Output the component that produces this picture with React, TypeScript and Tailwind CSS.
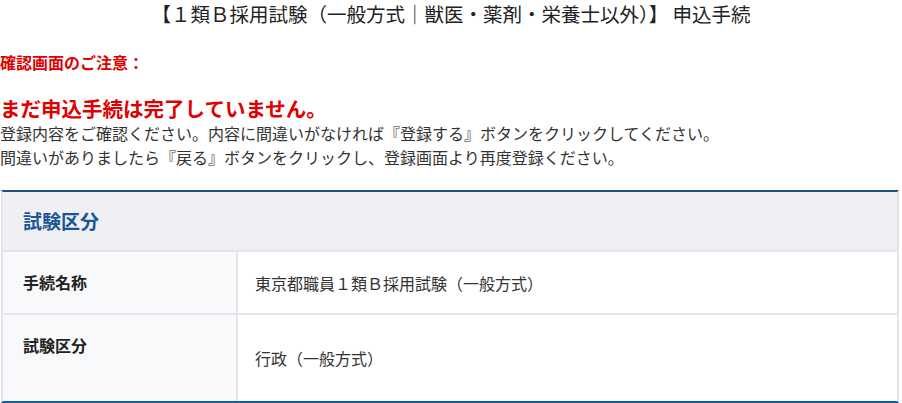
const font = { fontFamily: '"Noto Sans CJK JP", "Noto Sans", sans-serif' }

const rows = [
  { label: "手続名称", value: "東京都職員１類Ｂ採用試験（一般方式）", h: "h-[63px]" },
  { label: "試験区分", value: "行政（一般方式）", h: "h-[86px]" },
]

export default function App() {
  return (
    <div className="w-[902px] h-[403px] bg-white text-[#333] overflow-hidden" style={font}>
      <h1 className="text-center text-[19.5px] leading-[28px] font-normal text-[#222]">
        【１類Ｂ採用試験（一般方式｜獣医・薬剤・栄養士以外）】 申込手続
      </h1>

      <p className="mt-[23px] text-[16px] leading-[22px] font-bold text-[#e00000]">確認画面のご注意：</p>

      <p className="mt-[22px] text-[20.5px] leading-[26px] font-bold text-[#e00000]">
        まだ申込手続は完了していません。
      </p>
      <p className="text-[16px] leading-[24px]">
        登録内容をご確認ください。内容に間違いがなければ『登録する』ボタンをクリックしてください。
      </p>
      <p className="text-[16px] leading-[24px]">
        間違いがありましたら『戻る』ボタンをクリックし、登録画面より再度登録ください。
      </p>

      {/* 確認テーブル */}
      <div className="mt-[21px] ml-px w-[898px] border-t-2 border-b-2 border-t-[#1d4f7f] border-b-[#1d5a96] border-x-2 border-x-[#e3e5e8]">
        <div className="h-[60px] bg-[#eef0f3] flex items-center pl-5 border-b-2 border-[#e3e5e8]">
          <span className="text-[19px] font-bold text-[#1b5597]">試験区分</span>
        </div>
        {rows.map((r, i) => (
          <div
            key={r.label}
            className={`flex ${r.h} ${i < rows.length - 1 ? "border-b-2 border-[#e3e5e8]" : ""}`}
          >
            <div className="w-[235px] bg-[#f8f9fa] pl-5 pt-[18px] border-r-2 border-[#e3e5e8]">
              <span className="text-[16px] leading-[22px] font-bold text-[#222]">{r.label}</span>
            </div>
            <div className="flex-1 flex items-center pl-[17px] text-[16px] leading-[22px]">{r.value}</div>
          </div>
        ))}
      </div>
    </div>
  )
}
